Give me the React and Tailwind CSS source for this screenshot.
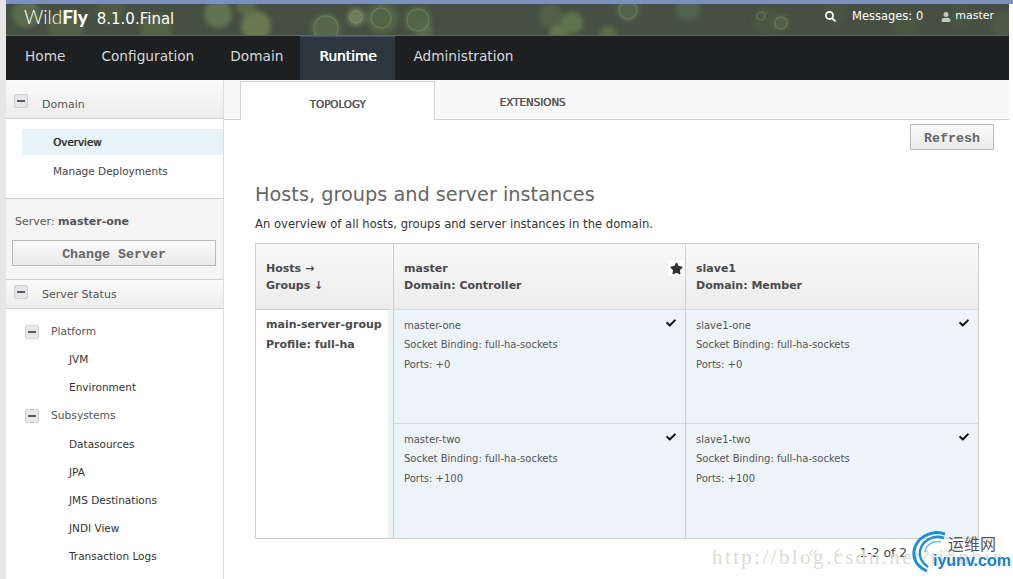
import { ChevronLeft, ChevronRight, ChevronsLeft, ChevronsRight } from "lucide-react";
import { FaCheck, FaSearch, FaStar, FaUser } from "react-icons/fa";

// x, r, y, colour of the blurry spots in the header picture
const SPOTS = [
  [20, 14, 10, "#6f8a58"], [60, 18, 24, "#5d7348"], [105, 14, 6, "#56683f"], [150, 16, 26, "#63784c"],
  [212, 14, 10, "#7c9a62"], [250, 15, 22, "#8aa55e"], [240, 10, 2, "#6d8552"], [320, 15, 24, "#66804f"],
  [350, 9, 13, "#93ad78"], [376, 16, 14, "#607a4d"], [412, 14, 16, "#5f7a4c"], [418, 9, 28, "#6d8752"],
  [545, 12, 12, "#5d7250"], [566, 11, 19, "#7a9a5c"], [552, 9, 30, "#7e9c5a"], [602, 9, 31, "#6f8a4f"],
  [622, 12, 6, "#5f7a55"], [682, 12, 5, "#5f7a5b"], [760, 14, 18, "#4f6142"], [775, 9, 19, "#5c7550"],
  [830, 12, 10, "#4a5c42"], [900, 14, 22, "#4d5f45"], [955, 12, 14, "#4b5c44"], [998, 13, 20, "#55684b"],
];
const RINGS = [[350, 6, 13], [320, 12, 24], [375, 10, 14], [412, 11, 16], [622, 9, 6], [775, 6, 19], [755, 4, 12]];

const NAV = ["Home", "Configuration", "Domain", "Runtime", "Administration"];

function Minus() {
  return (
    <span className="flex h-[14px] w-[14px] shrink-0 items-center justify-center rounded-[2px] border border-[#d0d0d0] bg-[#e6e6e6]">
      <span className="h-[2px] w-[8px] bg-[#555b66]" />
    </span>
  );
}

function SideHeader({ label, h, textClass }) {
  return (
    <div className={`flex ${h} items-start border-b border-[#cfcfcf] bg-gradient-to-b from-[#fafafa] to-[#ededed] pl-[8px] text-[#555]`}>
      <Minus />
      <span className={`ml-[14px] text-[11px] leading-[14px] ${textClass}`}>{label}</span>
    </div>
  );
}

function SubItem({ label, className = "" }) {
  return <div className={`flex h-[28px] items-center pl-[63px] text-[10.5px] text-[#333] ${className}`}>{label}</div>;
}

function SubGroup({ label }) {
  return (
    <div className="flex h-[28px] items-center pl-[19px] text-[10.7px] text-[#555]">
      <Minus />
      <span className="ml-[12px]">{label}</span>
    </div>
  );
}

function HostHead({ name, role, star }) {
  return (
    <div className="relative flex flex-col justify-center border-l border-[#cfcfcf] bg-gradient-to-b from-[#f9f9f9] to-[#ececec] pl-[10px] text-[11px] font-bold leading-[17px] text-[#4a4a4a]">
      <div>{name}</div>
      <div>{role}</div>
      {star && (
        <span className="absolute right-[1px] top-[16px] flex h-[16px] w-[16px] items-center justify-center bg-white">
          <FaStar className="text-[13px] text-[#333]" />
        </span>
      )}
    </div>
  );
}

function Server({ name, ports }) {
  return (
    <div className="relative flex flex-col gap-[6px] border-t border-l border-t-[#d8dcdf] border-l-[#cfcfcf] bg-[#edf4f8] pl-[10px] pt-[8px] text-[10px] leading-[14px] text-[#555]">
      <div className="translate-y-[1px]">{name}</div>
      <div>Socket Binding: full-ha-sockets</div>
      <div>Ports: {ports}</div>
      <FaCheck className="absolute right-[9px] top-[8px] text-[10px] text-[#111]" />
    </div>
  );
}

export default function App() {
  return (
    <div className="flex h-[579px] w-full overflow-hidden bg-white font-['DejaVu_Sans',sans-serif]">
      <div className="w-[6px] shrink-0 bg-[#e6e6e6]" />
      <div className="flex min-w-0 flex-1 flex-col pr-[4px]">
        <div className="-mr-[4px] h-[4px] bg-[#7b90bd]" />
        <header className="relative flex h-[32px] items-center justify-between overflow-hidden border-b border-[#5c6a62] bg-[#454f42] pb-[2px] pl-[18px] pr-[15px] text-white">
          <svg className="absolute left-0 top-0 h-[32px] w-[1003px]" viewBox="0 0 1003 32">
            <defs>
              <filter id="soft">
                <feGaussianBlur stdDeviation="2.4" />
              </filter>
            </defs>
            <g filter="url(#soft)" opacity="0.5">
              {SPOTS.map(([x, r, y, fill]) => (
                <circle key={`${x}-${y}`} cx={x} cy={y} r={r} fill={fill} />
              ))}
            </g>
            {RINGS.map(([x, r, y]) => (
              <circle key={`${x}-${y}`} cx={x} cy={y} r={r} fill="none" stroke="#a3b98a" strokeWidth="1.5" opacity="0.25" />
            ))}
          </svg>
          <div className="relative flex items-baseline">
            <span className="font-['Lato',sans-serif] text-[19px] font-light leading-none">
              Wild<span className="font-black">Fly</span>
            </span>
            <span className="ml-[9px] text-[15px]">8.1.0.Final</span>
          </div>
          <div className="relative -mt-[4px] flex items-center text-[11.5px]">
            <FaSearch className="text-[11px]" />
            <span className="ml-[16px]">Messages: 0</span>
            <FaUser className="ml-[18px] text-[10px] text-[#c8c8c8]" />
            <span className="ml-[4px] text-[11px]">master</span>
          </div>
        </header>
        <nav className="flex h-[44px] items-stretch bg-[#1d1f21] pl-[19px] text-[13.7px] text-[#d8d8d8]">
          {NAV.map((item, i) =>
            item === "Runtime" ? (
              <a key={item} className="flex w-[95px] items-center justify-center border-t border-[#3f5570] bg-[#2e3640] pb-[4px] text-white [text-shadow:0.6px_0_0_#fff]">
                {item}
              </a>
            ) : (
              <a key={item} className={i === 2 ? "mr-[17px] flex items-center pb-[4px]" : i === 4 ? "ml-[18px] flex items-center pb-[4px]" : "mr-[36px] flex items-center pb-[4px]"}>
                {item}
              </a>
            )
          )}
        </nav>
        <div className="flex min-h-0 flex-1">
          <aside className="w-[218px] shrink-0 border-r border-[#dcdcdc]">
            <SideHeader label="Domain" h="h-[39px] pt-[14px]" textClass="pt-[4px]" />
            <div className="pl-[16px] pt-[10px] text-[10.5px]">
              <div className="flex h-[26px] items-center bg-[#e8f3f9] pl-[31px] pt-[1px] text-[10.3px] text-[#333] [text-shadow:0.5px_0_0_#333]">Overview</div>
              <div className="flex h-[32px] items-center pl-[31px] pt-[2px] text-[#444]">Manage Deployments</div>
            </div>
            <div className="mt-[11px] h-[81px] border-t border-[#cfcfcf] bg-[#f5f5f5] px-[6px] pt-[15px]">
              <div className="pl-[3px] text-[11px] leading-[16px] text-[#555]">
                Server: <span className="font-bold">master-one</span>
              </div>
              <button className="mt-[10px] h-[26px] w-[204px] border border-[#b9b9b9] bg-gradient-to-b from-[#fafafa] to-[#eaeaea] pt-[3px] font-['Liberation_Mono',monospace] text-[13.3px] font-bold text-[#666]">
                Change Server
              </button>
            </div>
            <div className="border-t border-[#cfcfcf]">
              <SideHeader label="Server Status" h="h-[29px] pt-[5px]" textClass="pt-[3px]" />
            </div>
            <div className="pt-[9px]">
              <SubGroup label="Platform" />
              <SubItem label="JVM" />
              <SubItem label="Environment" />
              <SubGroup label="Subsystems" />
              <SubItem label="Datasources" className="mt-[1px]" />
              <SubItem label="JPA" />
              <SubItem label="JMS Destinations" />
              <SubItem label="JNDI View" />
              <SubItem label="Transaction Logs" />
            </div>
          </aside>
          <main className="relative min-w-0 flex-1">
            <div className="flex h-[40px] items-end border-b border-[#d2d2d2] bg-[#f9f9f9] pl-[16px] text-[10.3px] text-[#555] [text-shadow:0.5px_0_0_#555]">
              <div className="-mb-px flex h-[39px] w-[195px] items-center justify-center border border-b-0 border-[#d2d2d2] bg-white pt-[7px]">TOPOLOGY</div>
              <div className="flex h-[39px] w-[195px] items-center justify-center pt-[7px]">EXTENSIONS</div>
            </div>
            <div className="flex justify-end pr-[15px] pt-[4px]">
              <button className="h-[26px] w-[84px] border border-[#b9b9b9] bg-gradient-to-b from-[#fafafa] to-[#eaeaea] pt-[3px] font-['Liberation_Mono',monospace] text-[13.3px] font-bold text-[#666]">
                Refresh
              </button>
            </div>
            <div className="pl-[31px] pr-[30px]">
              <h1 className="mt-[31px] text-[19.3px] leading-[28px] text-[#666]">Hosts, groups and server instances</h1>
              <p className="mt-[7px] text-[11.6px] leading-[16px] text-[#333]">An overview of all hosts, groups and server instances in the domain.</p>
              <div className="mt-[11px] grid h-[296px] w-[724px] grid-cols-[137px_292px_293px] grid-rows-[65px_114px_1fr] border border-[#cfcfcf]">
                <div className="flex flex-col justify-center bg-gradient-to-b from-[#f9f9f9] to-[#ececec] pl-[10px] text-[11px] font-bold leading-[17px] text-[#4a4a4a]">
                  <div>Hosts →</div>
                  <div>Groups ↓</div>
                </div>
                <HostHead name="master" role="Domain: Controller" star />
                <HostHead name="slave1" role="Domain: Member" />
                <div className="row-span-2 border-t border-r-[5px] border-t-[#cfcfcf] border-r-[#edf4f8] bg-white pl-[10px] pt-[5px] text-[11px] font-bold leading-[20px] text-[#4a4a4a]">
                  <div>main-server-group</div>
                  <div>Profile: full-ha</div>
                </div>
                <Server name="master-one" ports="+0" />
                <Server name="slave1-one" ports="+0" />
                <Server name="master-two" ports="+100" />
                <Server name="slave1-two" ports="+100" />
              </div>
              <div className="mt-[5px] flex w-[724px] items-center justify-end pr-[22px] text-[12.3px] text-[#444]">
                <ChevronsLeft className="h-[14px] w-[14px] text-[#ddd]" />
                <ChevronLeft className="ml-[10px] h-[14px] w-[14px] text-[#ddd]" />
                <span className="ml-[15px]">1-2 of 2</span>
                <ChevronRight className="ml-[13px] h-[14px] w-[14px] text-[#ddd]" />
                <ChevronsRight className="ml-[9px] h-[14px] w-[14px] text-[#ddd]" />
              </div>
            </div>
            {/* watermarks */}
            <div className="absolute bottom-[6px] left-[488px] whitespace-nowrap font-['Liberation_Serif',serif] text-[21px] tracking-[2.4px] text-[#dcdcd4]">http://blog.csdn.net/tianbin</div>
            <div className="absolute bottom-[6px] left-[687px] h-[42px] w-[100px]">
              <svg viewBox="0 0 40 42" className="absolute left-0 top-0 h-[42px] w-[40px]" fill="none">
                <path d="M34 3C20 -2 5 7 3 20c-1 9 4 16 13 20" stroke="#1c8fd8" strokeWidth="3" />
                <path d="M33 7C22 3 11 10 9 20c-1 7 2 12 8 16" stroke="#1c8fd8" strokeWidth="2.5" />
                <path d="M30 11c-8-2-15 3-16 10" stroke="#6cb8e8" strokeWidth="1.5" />
              </svg>
              <span className="absolute left-[37px] top-[2px] whitespace-nowrap font-['Noto_Sans_CJK_SC',sans-serif] text-[16px] leading-[20px] text-[#555]">运维网</span>
              <span className="absolute left-[22px] top-[21px] whitespace-nowrap font-['Liberation_Sans',sans-serif] text-[16px] font-bold leading-[18px] text-[#1a7fc8]">iyunv.com</span>
            </div>
          </main>
        </div>
      </div>
    </div>
  );
}
